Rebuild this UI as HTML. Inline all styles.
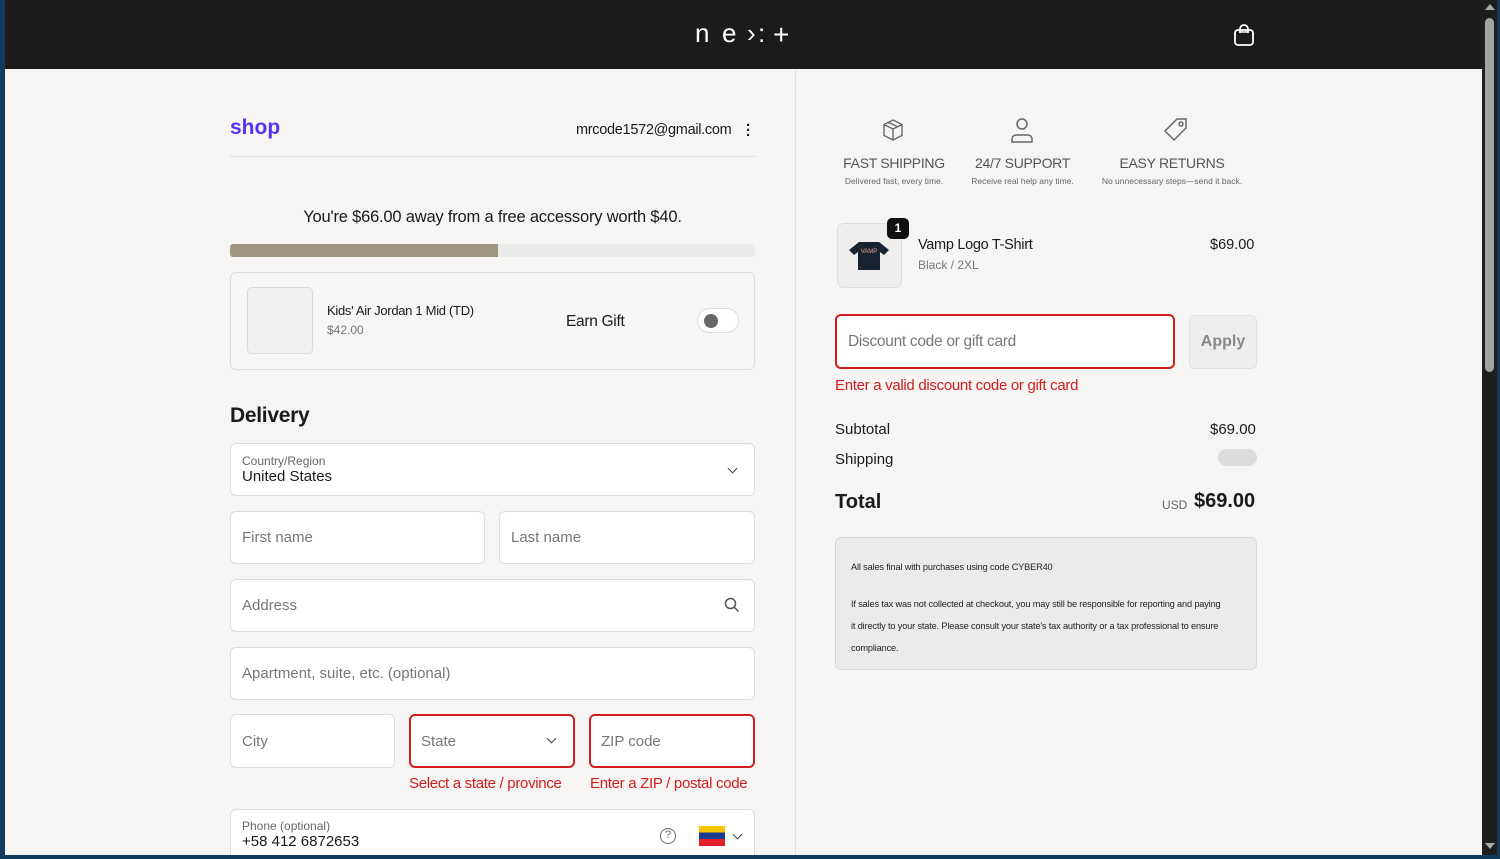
<!DOCTYPE html>
<html><head><meta charset="utf-8"><style>
*{box-sizing:border-box;margin:0;padding:0}
body{width:1500px;height:859px;overflow:hidden;background:#123a5c;font-family:"Liberation Sans",sans-serif;position:relative;color:#1a1a1a}
.win{position:absolute;left:5px;top:0;width:1477px;height:855px;background:#f6f5f4;overflow:hidden}
.hdr{position:absolute;left:0;top:0;width:1477px;height:69px;background:#1b1b1b}
.sb{position:absolute;left:1482px;top:0;width:15px;height:855px;background:#1e1e1e}
.thumb{position:absolute;left:1485px;top:18px;width:9px;height:354px;background:#a3a3a3;border-radius:5px}
.abs{position:absolute}
.inp{position:absolute;background:#fff;border:1px solid #dedcda;border-radius:6px;font-size:15px;color:#777;padding-left:11px;display:flex;align-items:center}
.err{border:2px solid #d11d1d;padding-left:10px}
.red{color:#d11d1d;font-size:15px;position:absolute;letter-spacing:-0.3px}
.chev{position:absolute;width:7px;height:7px;border-right:1.5px solid #444;border-bottom:1.5px solid #444;transform:rotate(45deg)}
.lg{position:absolute;color:#fff;font-size:26px;top:18px}
</style></head><body>
<div class="win">
<div class="hdr">
 <div class="lg" style="left:690px">n</div>
 <div class="lg" style="left:717px">e</div>
 <div class="lg" style="left:742px">›</div>
 <div class="lg" style="left:753px">:</div>
 <div class="lg" style="left:768px;font-size:28px;top:19px">+</div>
 <svg class="abs" style="left:1228px;top:23px" width="22" height="24" viewBox="0 0 22 24"><rect x="2" y="7" width="18" height="15" rx="3" fill="none" stroke="#fff" stroke-width="1.8"/><path d="M7 10V6a4 4 0 0 1 8 0v4" fill="none" stroke="#fff" stroke-width="1.8"/><path d="M7 9h8" stroke="#fff" stroke-width="1.5"/></svg>
</div>
<div class="abs" style="left:790px;top:69px;width:1px;height:786px;background:#e2e0de"></div>

<!-- left -->
<div class="abs" style="left:225px;top:116px;color:#5a31f4;font-size:21px;font-weight:bold">shop</div>
<div class="abs" style="left:571px;top:122px;font-size:14.5px;letter-spacing:-0.3px">mrcode1572@gmail.com</div>
<div class="abs" style="left:741px;top:123px;font-size:15px;font-weight:bold;line-height:5px">·<br>·<br>·</div>
<div class="abs" style="left:225px;top:156px;width:525px;height:1px;background:#dedcda"></div>
<div class="abs" style="left:225px;top:208px;width:525px;text-align:center;font-size:16.5px;letter-spacing:-0.2px">You're $66.00 away from a free accessory worth $40.</div>
<div class="abs" style="left:225px;top:244px;width:525px;height:13px;background:#ebeaea;border-radius:3px"><div style="width:268px;height:13px;background:#a09581;border-radius:3px 0 0 3px"></div></div>
<div class="abs" style="left:225px;top:272px;width:525px;height:98px;border:1px solid #dedcda;border-radius:6px;background:#f7f6f5"></div>
<div class="abs" style="left:242px;top:287px;width:66px;height:67px;background:#f1f0ef;border:1px solid #dcdad8;border-radius:5px"></div>
<div class="abs" style="left:322px;top:303px;font-size:13px;letter-spacing:-0.3px">Kids' Air Jordan 1 Mid (TD)</div>
<div class="abs" style="left:322px;top:323px;font-size:12px;color:#777">$42.00</div>
<div class="abs" style="left:561px;top:313px;font-size:15.5px;letter-spacing:-0.3px">Earn Gift</div>
<div class="abs" style="left:692px;top:308px;width:42px;height:25px;background:#fff;border:1px solid #ddd;border-radius:13px"><div style="position:absolute;left:6px;top:5px;width:14px;height:14px;border-radius:50%;background:#666"></div></div>

<div class="abs" style="left:225px;top:404px;font-size:21px;font-weight:bold;letter-spacing:-0.3px">Delivery</div>
<div class="inp" style="left:225px;top:443px;width:525px;height:53px;flex-direction:column;align-items:flex-start;justify-content:center"><div style="font-size:12px;color:#666">Country/Region</div><div style="font-size:15px;color:#1a1a1a">United States</div></div>
<div class="chev" style="left:724px;top:465px"></div>
<div class="inp" style="left:225px;top:511px;width:255px;height:53px">First name</div>
<div class="inp" style="left:494px;top:511px;width:256px;height:53px">Last name</div>
<div class="inp" style="left:225px;top:579px;width:525px;height:53px">Address</div>
<svg class="abs" style="left:719px;top:597px" width="16" height="16" viewBox="0 0 16 16"><circle cx="6.5" cy="6.5" r="5" fill="none" stroke="#555" stroke-width="1.5"/><path d="M10 10l4.5 4.5" stroke="#555" stroke-width="1.5"/></svg>
<div class="inp" style="left:225px;top:647px;width:525px;height:53px">Apartment, suite, etc. (optional)</div>
<div class="inp" style="left:225px;top:714px;width:165px;height:54px">City</div>
<div class="inp err" style="left:404px;top:714px;width:166px;height:54px">State</div>
<div class="chev" style="left:543px;top:735px"></div>
<div class="inp err" style="left:584px;top:714px;width:166px;height:54px">ZIP code</div>
<div class="red" style="left:404px;top:775px">Select a state / province</div>
<div class="red" style="left:585px;top:775px">Enter a ZIP / postal code</div>
<div class="inp" style="left:225px;top:809px;width:525px;height:60px;flex-direction:column;align-items:flex-start;justify-content:flex-start;padding-top:9px"><div style="font-size:12px;color:#666">Phone (optional)</div><div style="font-size:15px;color:#1a1a1a">+58 412 6872653</div></div>
<div class="abs" style="left:655px;top:828px;width:16px;height:16px;border:1.5px solid #666;border-radius:50%;font-size:11px;text-align:center;line-height:13px;color:#666">?</div>
<div class="abs" style="left:694px;top:826px;width:26px;height:20px;background:linear-gradient(#f7c600 0 33%,#1d3b8f 33% 66%,#e0202e 66%)"></div>
<div class="chev" style="left:729px;top:831px"></div>

<!-- right -->
<svg class="abs" style="left:876px;top:118px" width="24" height="24" viewBox="0 0 24 24" fill="none" stroke="#666" stroke-width="1.4"><path d="M12 2l9 4.5v11L12 22l-9-4.5v-11z M3 6.5l9 4.5 9-4.5 M12 11v11 M7.5 4.3l9 4.5"/></svg>
<svg class="abs" style="left:1005px;top:117px" width="24" height="26" viewBox="0 0 24 26" fill="none" stroke="#666" stroke-width="1.5"><circle cx="12" cy="7" r="5"/><path d="M2 25v-3a4 4 0 0 1 4-4h12a4 4 0 0 1 4 4v3z"/></svg>
<svg class="abs" style="left:1158px;top:117px" width="26" height="26" viewBox="0 0 26 26" fill="none" stroke="#666" stroke-width="1.5"><path d="M14 2h9v9L11 23 2 14z"/><circle cx="18" cy="7" r="2"/></svg>
<div class="abs" style="left:833px;top:155px;width:112px;text-align:center;font-size:14px;color:#555;letter-spacing:-0.3px">FAST SHIPPING</div>
<div class="abs" style="left:833px;top:176px;width:112px;text-align:center;font-size:8.5px;color:#666">Delivered fast, every time.</div>
<div class="abs" style="left:960px;top:155px;width:115px;text-align:center;font-size:14px;color:#555;letter-spacing:-0.3px">24/7 SUPPORT</div>
<div class="abs" style="left:960px;top:176px;width:115px;text-align:center;font-size:8.5px;color:#666">Receive real help any time.</div>
<div class="abs" style="left:1088px;top:155px;width:158px;text-align:center;font-size:14px;color:#555;letter-spacing:-0.3px">EASY RETURNS</div>
<div class="abs" style="left:1088px;top:176px;width:158px;text-align:center;font-size:8.5px;color:#666">No unnecessary steps—send it back.</div>

<div class="abs" style="left:832px;top:223px;width:65px;height:65px;background:#efeeed;border:1px solid #e0dedc;border-radius:7px"></div>
<svg class="abs" style="left:842px;top:240px" width="44" height="32" viewBox="0 0 44 32"><path d="M12 2h20l10 8-5 5-4-3v18H11V12l-4 3-5-5z" fill="#1a2330"/><text x="22" y="13" font-size="6" fill="#d9a48c" text-anchor="middle" font-family="Liberation Sans">VAMP</text></svg>
<div class="abs" style="left:882px;top:218px;width:22px;height:21px;background:#111;color:#fff;border-radius:5px;font-size:12px;font-weight:bold;text-align:center;line-height:21px">1</div>
<div class="abs" style="left:913px;top:237px;font-size:14.5px;letter-spacing:-0.3px">Vamp Logo T-Shirt</div>
<div class="abs" style="left:913px;top:258px;font-size:12px;color:#777">Black / 2XL</div>
<div class="abs" style="left:1205px;top:237px;font-size:14.5px">$69.00</div>

<div class="inp err" style="left:830px;top:314px;width:340px;height:55px;font-size:15.5px;padding-left:11px;letter-spacing:-0.3px">Discount code or gift card</div>
<div class="abs" style="left:1184px;top:315px;width:68px;height:54px;border:1px solid #e3e1df;border-radius:6px;background:#efeeed;color:#888;font-size:16px;font-weight:bold;text-align:center;line-height:52px">Apply</div>
<div class="red" style="left:830px;top:377px">Enter a valid discount code or gift card</div>
<div class="abs" style="left:830px;top:421px;font-size:15px">Subtotal</div>
<div class="abs" style="left:1205px;top:421px;font-size:15px">$69.00</div>
<div class="abs" style="left:830px;top:451px;font-size:15px">Shipping</div>
<div class="abs" style="left:1213px;top:449px;width:39px;height:17px;background:#dedcda;border-radius:9px"></div>
<div class="abs" style="left:830px;top:491px;font-size:20px;font-weight:bold">Total</div>
<div class="abs" style="left:1157px;top:498px;font-size:12px;color:#666">USD</div>
<div class="abs" style="left:1189px;top:490px;font-size:20px;font-weight:bold">$69.00</div>
<div class="abs" style="left:830px;top:537px;width:422px;height:133px;background:#ecebea;border:1px solid #dcdad8;border-radius:6px;padding:18px 15px 0 15px;font-size:9.2px;color:#222;line-height:22px;letter-spacing:-0.15px">All sales final with purchases using code CYBER40<div style="height:15px"></div><div style="line-height:22px;width:372px">If sales tax was not collected at checkout, you may still be responsible for reporting and paying it directly to your state. Please consult your state's tax authority or a tax professional to ensure compliance.</div></div>
</div>
<div class="sb"></div>
<div class="thumb"></div>
<div class="abs" style="left:1485px;top:4px;width:0;height:0;border-left:5px solid transparent;border-right:5px solid transparent;border-bottom:6px solid #aaa"></div>
<div class="abs" style="left:1485px;top:843px;width:0;height:0;border-left:5px solid transparent;border-right:5px solid transparent;border-top:6px solid #aaa"></div>
</body></html>
